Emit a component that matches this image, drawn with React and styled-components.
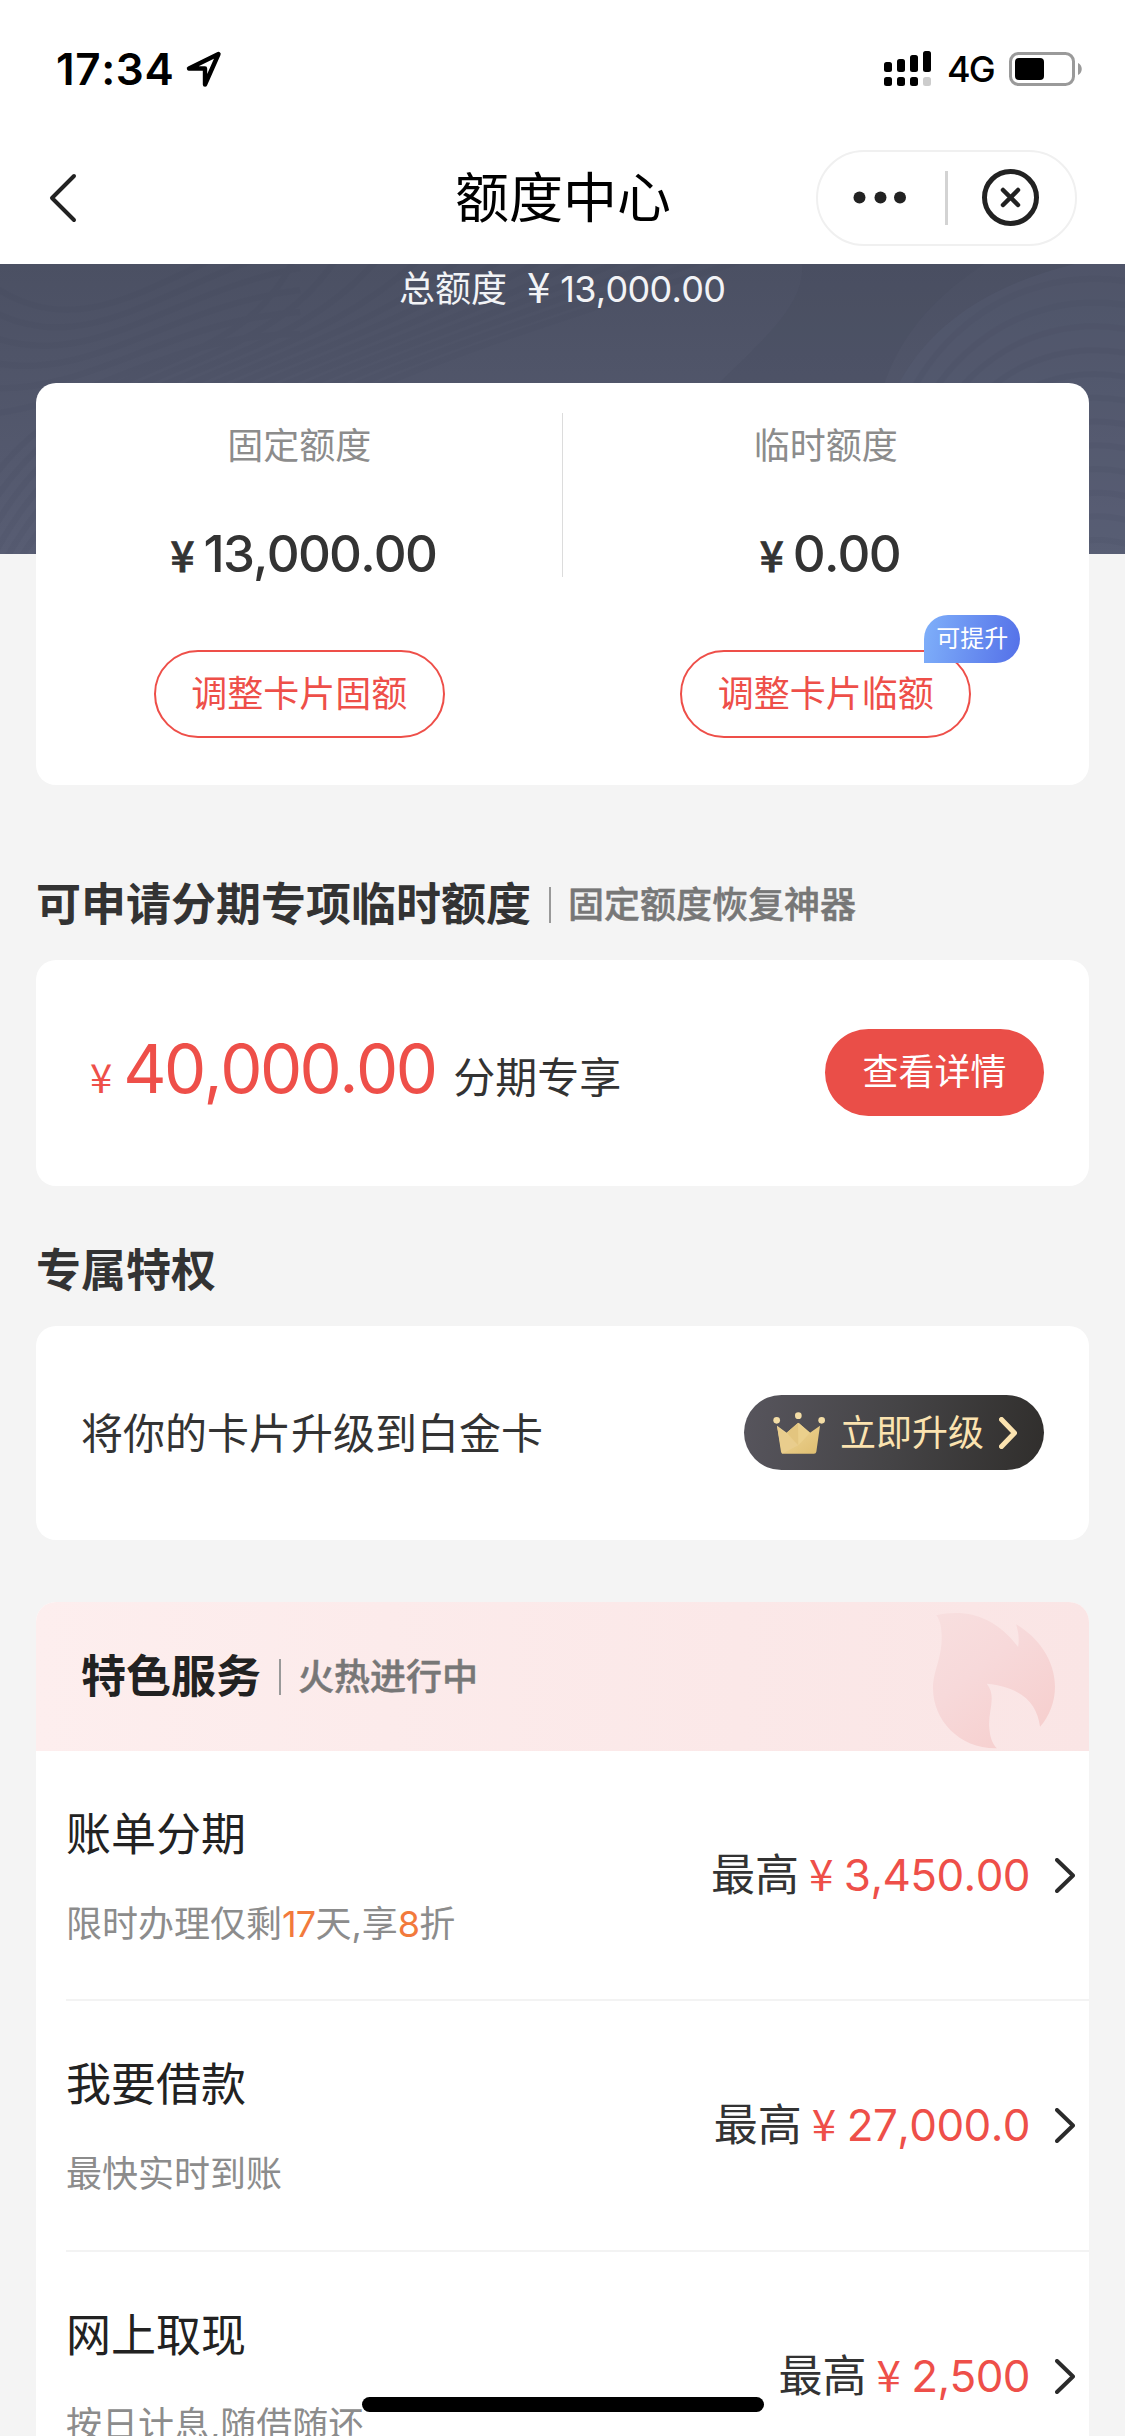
import React from 'react';
import styled, { createGlobalStyle, ThemeProvider } from 'styled-components';

const theme = {
  colors: {
    primary: '#ee4f49',
    bg: '#f4f4f4',
    txt: '#333333',
    title: '#222222',
    sub: '#777777',
    gray: '#8c8c8c',
    orange: '#f27a3c',
    gold: '#fbe3b0',
  },
};

const GlobalStyle = createGlobalStyle`
  * {
    box-sizing: border-box;
    margin: 0;
    padding: 0;
  }

  body {
    font-family: Inter, 'Noto Sans CJK SC', sans-serif;
    font-kerning: none;
    background: #f4f4f4;
  }

  button {
    font-family: inherit;
    border: 0;
    background: none;
  }
`;

const Page = styled.div`
  position: relative;
  width: 1125px;
  height: 2436px;
  overflow: hidden;
  background: ${({ theme }) => theme.colors.bg};
  color: ${({ theme }) => theme.colors.txt};
`;

const StatusBar = styled.div`
  display: flex;
  justify-content: space-between;
  height: 132px;
  padding: 47px 43px 0 56px;
  background: #fff;
`;

const StatusGroup = styled.div`
  display: flex;
  align-items: center;
  height: 44px;
  color: #000;
`;

const Time = styled.span`
  width: 130px;
  font-size: 44px;
  font-weight: 600;
  line-height: 44px;
  letter-spacing: 0.6px;
`;

const Network = styled.span`
  width: 62px;
  margin-left: 15px;
  font-size: 36px;
  font-weight: 500;
  line-height: 46px;
  letter-spacing: -2px;
`;

const NavBar = styled.header`
  display: grid;
  grid-template-columns: 1fr auto 1fr;
  align-items: center;
  height: 132px;
  padding: 0 48px 0 48px;
  background: #fff;
`;

const NavTitle = styled.h1`
  padding: 2px 0 0 1px;
  font-size: 54px;
  font-weight: 400;
  line-height: 60px;
  color: #000;
`;

const BackBtn = styled.button`
  display: flex;
  justify-self: start;
`;

const Capsule = styled.div`
  display: flex;
  justify-self: end;
  width: 261px;
  height: 96px;
  border: 2px solid #f0f0f0;
  border-radius: 48px;
`;

const Hero = styled.section`
  position: relative;
  height: 290px;
  background: linear-gradient(#4b5063, #585d73);
`;

const Waves = styled.svg`
  position: absolute;
  inset: 0;
`;

const Total = styled.p`
  position: relative;
  display: flex;
  align-items: center;
  height: 49px;
  padding-left: 399px;
  font-size: 36px;
  line-height: 48px;
  color: #f2f3f6;
`;

const TotalNum = styled.span`
  font-size: 36px;
  letter-spacing: -0.7px;
`;

const Yen = styled.span`
  font-family: 'Noto Sans CJK SC', sans-serif;
  font-size: ${({ $size }) => $size}px;
  margin: ${({ $margin }) => $margin || 0};
  line-height: 1;
`;

const BigYen = styled(Yen)`
  margin-top: -7px;
`;

const BoldYen = styled(Yen)`
  -webkit-text-stroke: 0.8px currentColor;
`;

const Main = styled.main`
  padding: 0 36px;
`;

const Card = styled.section`
  background: #fff;
  border-radius: 20px;
`;

const LimitCard = styled(Card)`
  position: relative;
  display: grid;
  grid-template-columns: 1fr 0 1fr;
  height: 402px;
  margin-top: -171px;
`;

const Divider = styled.span`
  width: 1px;
  height: 164px;
  margin: 30px 0 0 -1px;
  background: #dcdcdc;
`;

const LimitCol = styled.div`
  display: flex;
  flex-direction: column;
  align-items: center;
  padding-top: 39px;
`;

const LimitLabel = styled.p`
  font-size: 36px;
  line-height: 48px;
  color: ${({ theme }) => theme.colors.gray};
`;

const LimitAmount = styled.p`
  display: flex;
  align-items: baseline;
  margin: 54px 0 66px;
  font-size: 51px;
  font-weight: 500;
  line-height: 60px;
  padding-left: 8px;
  letter-spacing: -1.8px;
`;

const OutlineBtn = styled.button`
  position: relative;
  width: 291px;
  height: 88px;
  border: 2px solid ${({ theme }) => theme.colors.primary};
  border-radius: 44px;
  font-size: 36px;
  line-height: 48px;
  color: ${({ theme }) => theme.colors.primary};
`;

const Badge = styled.span`
  position: absolute;
  left: 242px;
  top: -37px;
  width: 96px;
  height: 48px;
  border-radius: 24px 24px 24px 0;
  background: linear-gradient(100deg, #7fb0fa, #5470e8);
  font-size: 24px;
  line-height: 48px;
  color: #fff;
`;

const SectionHead = styled.div`
  display: flex;
  align-items: center;
  height: 60px;
  margin-top: ${({ $top }) => $top}px;
`;

const SectionTitle = styled.h2`
  font-size: 45px;
  font-weight: 600;
  line-height: 60px;
  color: ${({ $color, theme }) => $color || theme.colors.txt};
`;

const SectionSub = styled.span`
  display: flex;
  align-items: center;
  font-size: 36px;
  font-weight: 500;
  line-height: 60px;
  color: ${({ theme }) => theme.colors.sub};
  -webkit-text-stroke: 0.5px currentColor;

  &::before {
    content: '';
    width: 2px;
    height: 36px;
    margin: 0 17px 0 18px;
    background: #999;
  }
`;

const RowCard = styled(Card)`
  display: flex;
  align-items: center;
  justify-content: space-between;
  height: ${({ $height }) => $height}px;
  margin-top: ${({ $top }) => $top}px;
  padding: 0 45px;
`;

const Offer = styled.p`
  display: flex;
  align-items: baseline;
  padding: 0 0 8px 8px;
  color: ${({ theme }) => theme.colors.primary};
`;

const OfferNum = styled.span`
  font-size: 67px;
  line-height: 80px;
  letter-spacing: -2.6px;
`;

const OfferUnit = styled.span`
  margin-left: 18px;
  font-size: 42px;
  color: ${({ theme }) => theme.colors.txt};
`;

const DetailBtn = styled.button`
  width: 219px;
  height: 87px;
  margin-bottom: 2px;
  border-radius: 44px;
  background: #ea4e48;
  font-size: 36px;
  line-height: 48px;
  color: #fff;
`;

const UpgradeText = styled.p`
  padding-top: 1px;
  font-size: 42px;
  line-height: 60px;
`;

const UpgradeBtn = styled.button`
  display: flex;
  align-items: center;
  width: 300px;
  height: 75px;
  margin-bottom: 1px;
  padding-left: 29px;
  border-radius: 38px;
  background: linear-gradient(100deg, #57555d, #454446 50%, #302e2c);
  font-size: 36px;
  line-height: 48px;
  color: ${({ theme }) => theme.colors.gold};

  span {
    margin: 1px 15px 0 15px;
  }
`;

const ServiceCard = styled(Card)`
  margin-top: 62px;
  overflow: hidden;
`;

const ServiceHead = styled.div`
  position: relative;
  display: flex;
  align-items: center;
  height: 149px;
  padding-left: 45px;
  background: linear-gradient(90deg, #fdeeee, #fae5e5);
`;

const Flame = styled.svg`
  position: absolute;
  right: 34px;
  top: 10px;
`;

const ServiceItem = styled.li`
  display: flex;
  justify-content: space-between;
  height: ${({ $height }) => $height}px;
  margin-left: 30px;
  padding-right: 14px;
  border-bottom: 2px solid #f3f3f3;
`;

const ServiceInfo = styled.div`
  padding-top: 54px;
`;

const ServiceName = styled.h3`
  font-size: 45px;
  font-weight: 400;
  line-height: 60px;
  color: ${({ theme }) => theme.colors.title};
`;

const ServiceDesc = styled.p`
  margin-top: 35px;
  font-size: 36px;
  line-height: 48px;
  color: ${({ theme }) => theme.colors.gray};

  em {
    font-style: normal;
    letter-spacing: -0.8px;
    color: ${({ theme }) => theme.colors.orange};
  }
`;

const ServiceQuota = styled.div`
  display: flex;
  align-items: center;
  height: 60px;
  margin-top: 94px;
  font-size: 44px;
  line-height: 60px;

  strong {
    font-weight: 400;
    letter-spacing: -0.6px;
    color: ${({ theme }) => theme.colors.primary};
  }

  svg {
    margin-left: 25px;
  }
`;

const List = styled.ul`
  list-style: none;
`;

const HomeIndicator = styled.div`
  position: absolute;
  left: 362px;
  top: 2397px;
  width: 402px;
  height: 15px;
  border-radius: 8px;
  background: #000;
`;

const SERVICES = [
  {
    name: '账单分期',
    desc: (
      <>
        限时办理仅剩<em>17</em>天,享<em>8</em>折
      </>
    ),
    quota: '3,450.00',
    height: 250,
  },
  { name: '我要借款', desc: '最快实时到账', quota: '27,000.0', height: 251 },
  { name: '网上取现', desc: '按日计息,随借随还', quota: '2,500', height: 251 },
];

const LocationIcon = () => (
  <svg width="36" height="37" viewBox="0 0 36 37" fill="none">
    <path
      d="M32.5 3 3 17.5h16v16L32.5 3Z"
      stroke="#000"
      strokeWidth="4.4"
      strokeLinejoin="round"
    />
  </svg>
);

const SignalIcon = () => (
  <svg width="48" height="36" viewBox="0 0 48 36">
    <rect x="0" y="11" width="8" height="10" rx="2.5" />
    <rect x="13" y="8" width="8" height="13" rx="2.5" />
    <rect x="26" y="4" width="8" height="17" rx="2.5" />
    <rect x="39" y="0" width="8" height="21" rx="2.5" />
    <rect x="0" y="26" width="8" height="9" rx="2.5" />
    <rect x="13" y="26" width="8" height="9" rx="2.5" />
    <rect x="26" y="26" width="8" height="9" rx="2.5" />
    <rect x="39" y="26" width="8" height="9" rx="2.5" fill="#ccc" />
  </svg>
);

const BatteryIcon = () => (
  <svg width="73" height="34" viewBox="0 0 73 34">
    <rect x="1.5" y="1.5" width="63" height="31" rx="8" fill="none" stroke="#9a9a9a" strokeWidth="3" />
    <rect x="6" y="6" width="29" height="22" rx="4" />
    <path d="M69 11c5 2 5 10 0 12Z" fill="#9a9a9a" />
  </svg>
);

const MenuIcon = () => (
  <svg width="257" height="92" viewBox="0 0 257 92" fill="none">
    <g fill="#222">
      <circle cx="41.5" cy="45.5" r="6" />
      <circle cx="62.5" cy="45.5" r="6" />
      <circle cx="82" cy="45.5" r="6" />
    </g>
    <path d="M128.5 19v54" stroke="#d3d3d3" strokeWidth="3" />
    <circle cx="192.5" cy="45.5" r="26" stroke="#222" strokeWidth="5" />
    <path d="m185 38 15 15m0-15-15 15" stroke="#222" strokeWidth="4.5" strokeLinecap="round" />
  </svg>
);

const CrownIcon = () => (
  <svg width="52" height="42" viewBox="115 88 156 126">
    <defs>
      <linearGradient id="crown" x1="0" y1="0" x2="1" y2="1">
        <stop offset="0" stopColor="#f0d89c" />
        <stop offset="1" stopColor="#dfbe70" />
      </linearGradient>
    </defs>
    <path
      d="M127 129 156 150 187 123Q191 119 195 123L226 150 256 129 245 207Q244 213 238 213H146Q140 213 139 207Z"
      fill="url(#crown)"
    />
    <path d="M156 150 191 188 191 120Z" fill="#e3c57f" />
    <path d="M191 188 226 150 191 120Z" fill="#ebd08c" />
    <path d="M127 129 191 188 142 213Z" fill="#e9cd8d" />
    <g fill="#f3dda6">
      <circle cx="126" cy="113" r="10" />
      <circle cx="191" cy="99" r="10" />
      <circle cx="261" cy="113" r="10" />
    </g>
  </svg>
);

const HeroWaves = () => {
  const step = [...Array(12).keys()];
  return (
    <Waves width="1125" height="290" viewBox="0 0 1125 290" fill="none">
      <path
        d="M872 290C858 120 930 20 1125 -10V290Z"
        fill="#5b6078"
        opacity=".3"
      />
      <path
        d="M800 -10C820 60 700 110 560 290H880C850 130 900 50 1000 -10Z"
        fill="#43475a"
        opacity=".18"
      />
      <g stroke="#3f4459" strokeWidth="6" opacity=".1">
        {step.map((i) => (
          <path
            key={i}
            d={`M${-60 + i * 12} 330C${10 + i * 22} ${60 + i * 8} ${240 + i * 14} ${150 - i * 4} ${300 + i * 45} -20`}
          />
        ))}
        {step.map((i) => (
          <path
            key={i}
            d={`M${880 + i * 14} ${300 + i * 10}C${865 + i * 14} ${90 + i * 20} ${1010 + i * 4} ${-10 + i * 24} 1140 ${20 + i * 24}`}
          />
        ))}
        {step.slice(0, 6).map((i) => (
          <path
            key={i}
            d={`M-10 ${20 + i * 26}C90 ${90 + i * 10} 170 ${i * 14} 300 ${-40 + i * 22}`}
          />
        ))}
      </g>
    </Waves>
  );
};

const FlameIcon = () => (
  <Flame width="122" height="137" viewBox="70 50 367 412">
    <defs>
      <linearGradient id="flame" x1="0" y1="0" x2=".7" y2="1">
        <stop offset="0" stopColor="#f8dfdf" />
        <stop offset=".45" stopColor="#f7d9da" />
        <stop offset="1" stopColor="#f6cfce" />
      </linearGradient>
    </defs>
    <path
      d="M80 60C165 40 255 60 326 155 330 130 327 110 320 87 385 125 437 195 437 275 437 320 420 365 392 395 383 330 345 278 232 266 262 305 236 345 239 395 241 425 248 445 262 460 150 462 70 375 70 280 70 225 98 190 96 120 95 95 92 76 80 60Z"
      fill="url(#flame)"
    />
  </Flame>
);

const Arrow = ({ width, height, color, stroke }) => (
  <svg width={width} height={height} viewBox={`0 0 ${width} ${height}`} fill="none">
    <path
      d={`M${stroke / 2} ${stroke / 2}L${width - stroke / 2} ${height / 2}L${stroke / 2} ${height - stroke / 2}`}
      stroke={color}
      strokeWidth={stroke}
      strokeLinecap="round"
      strokeLinejoin="round"
    />
  </svg>
);

const App = () => {
  return (
    <ThemeProvider theme={theme}>
      <GlobalStyle />
      <Page>
        <StatusBar>
          <StatusGroup>
            <Time>17:34</Time>
            <LocationIcon />
          </StatusGroup>
          <StatusGroup>
            <SignalIcon />
            <Network>4G</Network>
            <BatteryIcon />
          </StatusGroup>
        </StatusBar>
        <NavBar>
          <BackBtn aria-label="返回">
            <svg width="30" height="50" viewBox="0 0 30 50" fill="none">
              <path d="M26 3 4 25l22 22" stroke="#222" strokeWidth="4" strokeLinecap="round" strokeLinejoin="round" />
            </svg>
          </BackBtn>
          <NavTitle>额度中心</NavTitle>
          <Capsule>
            <MenuIcon />
          </Capsule>
        </NavBar>
        <Hero>
          <HeroWaves />
          <Total>
            总额度
            <BigYen $size={42} $margin="0 10px 0 20px">¥</BigYen>
            <TotalNum>13,000.00</TotalNum>
          </Total>
        </Hero>
        <Main>
          <LimitCard>
            <LimitCol>
              <LimitLabel>固定额度</LimitLabel>
              <LimitAmount>
                <BoldYen $size={42} $margin="0 11px 0 0">¥</BoldYen>
                13,000.00
              </LimitAmount>
              <OutlineBtn>调整卡片固额</OutlineBtn>
            </LimitCol>
            <Divider />
            <LimitCol>
              <LimitLabel>临时额度</LimitLabel>
              <LimitAmount>
                <BoldYen $size={42} $margin="0 11px 0 0">¥</BoldYen>
                0.00
              </LimitAmount>
              <OutlineBtn>
                调整卡片临额
                <Badge>可提升</Badge>
              </OutlineBtn>
            </LimitCol>
          </LimitCard>

          <SectionHead $top={90}>
            <SectionTitle>可申请分期专项临时额度</SectionTitle>
            <SectionSub>固定额度恢复神器</SectionSub>
          </SectionHead>
          <RowCard $height={226} $top={25}>
            <Offer>
              <Yen $size={40} $margin="0 11px 0 1px">¥</Yen>
              <OfferNum>40,000.00</OfferNum>
              <OfferUnit>分期专享</OfferUnit>
            </Offer>
            <DetailBtn>查看详情</DetailBtn>
          </RowCard>

          <SectionHead $top={55}>
            <SectionTitle>专属特权</SectionTitle>
          </SectionHead>
          <RowCard $height={214} $top={25}>
            <UpgradeText>将你的卡片升级到白金卡</UpgradeText>
            <UpgradeBtn>
              <CrownIcon />
              <span>立即升级</span>
              <Arrow width={18} height={32} color="#fbe3b0" stroke={5} />
            </UpgradeBtn>
          </RowCard>

          <ServiceCard>
            <ServiceHead>
              <SectionTitle $color="#222">特色服务</SectionTitle>
              <SectionSub>火热进行中</SectionSub>
              <FlameIcon />
            </ServiceHead>
            <List>
              {SERVICES.map(({ name, desc, quota, height }) => (
                <ServiceItem key={name} $height={height}>
                  <ServiceInfo>
                    <ServiceName>{name}</ServiceName>
                    <ServiceDesc>{desc}</ServiceDesc>
                  </ServiceInfo>
                  <ServiceQuota>
                    最高
                    <strong>
                      <Yen $size={44} $margin="0 11px 0 10px">¥</Yen>
                      {quota}
                    </strong>
                    <Arrow width={20} height={35} color="#2b2b2b" stroke={4} />
                  </ServiceQuota>
                </ServiceItem>
              ))}
            </List>
          </ServiceCard>
        </Main>
        <HomeIndicator />
      </Page>
    </ThemeProvider>
  );
};

export default App;
